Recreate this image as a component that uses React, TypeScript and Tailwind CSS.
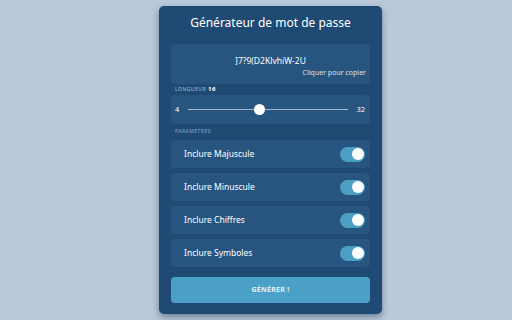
import React from "react";

const rows = ["Inclure Majuscule", "Inclure Minuscule", "Inclure Chiffres", "Inclure Symboles"];

function Toggle() {
  return (
    <div className="w-[25px] h-[15px] rounded-full bg-[#4b9fc4] flex items-center justify-end pr-[1px]">
      <div className="w-[12px] h-[12px] rounded-full bg-white" />
    </div>
  );
}

export default function App() {
  return (
    <div
      className="w-[512px] h-[320px] bg-[#b9c9d9] flex pl-[159px] pt-[6px]"
      style={{ fontFamily: '"Noto Sans", "Open Sans", sans-serif' }}
    >
      <div className="w-[223px] h-[308px] rounded-[5px] bg-[#1f4a73] px-[12px] flex flex-col shadow-[0_3px_6px_rgba(20,40,70,0.45)]">
        <div className="mt-[8px] h-[18px] leading-[18px] text-center text-white text-[12px]">
          Générateur de mot de passe
        </div>
        <div className="mt-[12px] h-[40px] rounded-[4px] bg-[#27557f] flex flex-col">
          <div className="mt-[11px] h-[12px] leading-[12px] text-center text-white text-[8.5px]">
            ]7?9(D2KlvhiW-2U
          </div>
          <div className="mt-[1px] h-[9px] leading-[9px] text-right pr-[4px] text-[7px] text-[#d6e2ee]">
            Cliquer pour copier
          </div>
        </div>
        <div className="h-[11px] flex items-center pl-[4px] text-[5px] tracking-[0.5px] text-[#a9c0d6] uppercase">
          Longueur <span className="ml-[2px] text-[6px] font-bold text-white">16</span>
        </div>
        <div className="h-[29px] rounded-[4px] bg-[#27557f] flex items-center pl-[4px] pr-[5px] text-[7.5px] text-white">
          <span className="w-[8px]">4</span>
          <div className="ml-[5px] flex-1 relative h-[10px] flex items-center">
            <div className="w-full h-[1px] bg-[#9fb6cc]" />
            <div className="absolute left-[66px] top-0 w-[11px] h-[11px] -mt-[0.5px] rounded-full bg-white" />
          </div>
          <span className="ml-[8px]">32</span>
        </div>
        <div className="h-[16px] flex items-center pl-[4px] text-[5px] tracking-[0.5px] text-[#8fa9c3] uppercase">
          Parametres
        </div>
        <div className="flex flex-col gap-[5px]">
          {rows.map((r) => (
            <div
              key={r}
              className="h-[28px] rounded-[4px] bg-[#27557f] flex items-center justify-between pl-[13px] pr-[5px]"
            >
              <span className="text-[8.5px] text-white">{r}</span>
              <Toggle />
            </div>
          ))}
        </div>
        <div className="mt-[10px] h-[26px] rounded-[4px] bg-[#4aa0c6] flex items-center justify-center text-[7px] font-bold tracking-[0.3px] text-[#e6f2f8]">
          GÉNÉRER !
        </div>
      </div>
    </div>
  );
}
